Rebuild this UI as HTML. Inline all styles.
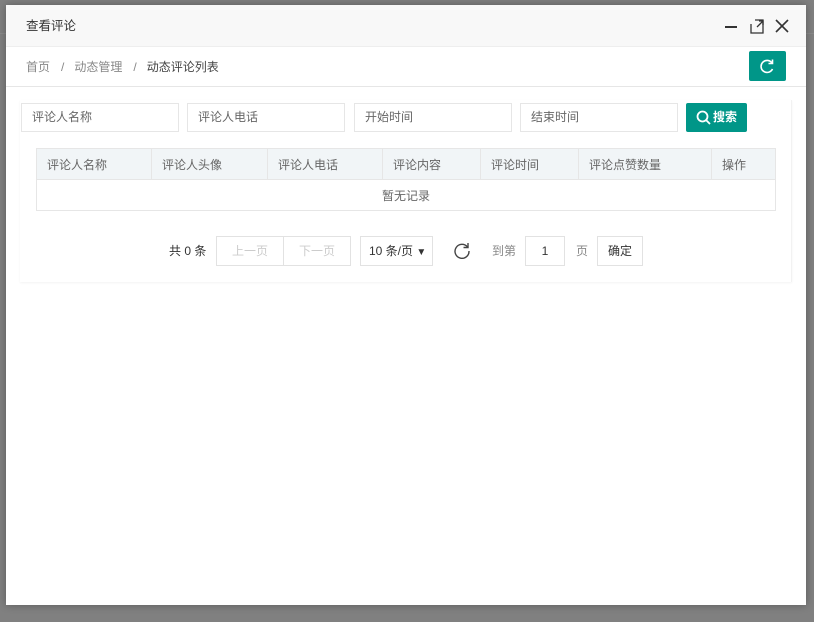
<!DOCTYPE html>
<html><head><meta charset="utf-8"><style>
*{box-sizing:border-box;margin:0;padding:0}
body{width:814px;height:622px;background:#808080;font-family:"Liberation Sans","Noto Sans CJK SC",sans-serif;font-size:12px;color:#333;position:relative;overflow:hidden}
.bgrow{position:absolute;left:0;right:0;height:1px;background:#8a8a8a}
.modal{position:absolute;left:6px;top:5px;width:800px;height:600px;background:#fff;box-shadow:0 0 8px rgba(0,0,0,.3)}
.hd{height:42px;background:#f8f8f8;border-bottom:1px solid #eee;padding-left:20px;line-height:42px;font-size:12.5px;color:#333;position:relative}
.bc{height:40px;border-bottom:1px solid #e6e6e6;position:relative;padding-left:20px;line-height:40px;color:#888}
.bc span.s{margin:0 10px 0 11px}
.refresh{position:absolute;right:20px;top:4px;width:37px;height:30px;background:#009688;border-radius:2px}
.inp{position:absolute;top:98px;height:29px;width:158px;border:1px solid #e6e6e6;padding-left:10px;line-height:27px;color:#666}
.sb{position:absolute;top:98px;left:680px;width:61px;height:29px;background:#009688;color:#fff;font-weight:bold;line-height:29px;padding-left:27px;border-radius:2px}
table{position:absolute;left:30px;top:143px;width:740px;border-collapse:collapse}
th,td{border:1px solid #e6e6e6;height:31px;font-weight:normal;text-align:left;padding-left:10px;color:#666}
th{background:#f1f5f7}
td{text-align:center;padding:0}
.pg{position:absolute;top:231px;height:30px;border:1px solid #e2e2e2;line-height:28px;text-align:center;background:#fff}
</style></head><body>
<div class="bgrow" style="top:33px"></div>
<div class="modal">
<div class="hd">查看评论
<svg style="position:absolute;right:68px;top:14px" width="14" height="14"><line x1="1" y1="8" x2="13" y2="8" stroke="#333" stroke-width="2"/></svg>
<svg style="position:absolute;right:42px;top:14px" width="14" height="15" fill="none" stroke="#333" stroke-width="1.3"><path d="M1 5V14H13V1H5"/><path d="M7 8L12.5 2.5M9 2H13V6"/></svg>
<svg style="position:absolute;right:17px;top:14px" width="14" height="14" stroke="#333" stroke-width="1.6"><line x1="1" y1="1" x2="13" y2="13"/><line x1="13" y1="1" x2="1" y2="13"/></svg>
</div>
<div class="bc">首页<span class="s">/</span>动态管理<span class="s">/</span><span style="color:#444">动态评论列表</span>
<div class="refresh"><svg width="37" height="30" fill="none" stroke="#fff" stroke-width="1.6"><path d="M23 12A6 6 0 1 0 23.5 18"/><path d="M23.5 8.5V12.5H19.5"/></svg></div>
</div>
<div style="position:absolute;left:14px;top:95px;width:772px;height:182px;box-shadow:0 1px 2px rgba(0,0,0,.05);border-right:1px solid #f2f2f2"></div>
<div class="inp" style="left:15px">评论人名称</div>
<div class="inp" style="left:181px">评论人电话</div>
<div class="inp" style="left:348px">开始时间</div>
<div class="inp" style="left:514px">结束时间</div>
<div class="sb"><svg style="position:absolute;left:10px;top:7px" width="16" height="16" fill="none" stroke="#fff" stroke-width="1.8"><circle cx="6.5" cy="6.5" r="5"/><line x1="10" y1="10" x2="14" y2="14"/></svg>搜索</div>
<table><tr><th style="width:115px">评论人名称</th><th style="width:116px">评论人头像</th><th style="width:115px">评论人电话</th><th style="width:98px">评论内容</th><th style="width:98px">评论时间</th><th style="width:133px">评论点赞数量</th><th>操作</th></tr>
<tr><td colspan="7">暂无记录</td></tr></table>
<div style="position:absolute;left:163px;top:231px;line-height:30px;color:#333">共 0 条</div>
<div class="pg" style="left:210px;width:68px;color:#ccc">上一页</div>
<div class="pg" style="left:277px;width:68px;color:#ccc">下一页</div>
<div class="pg" style="left:354px;width:73px;color:#333;text-align:left;padding-left:8px">10 条/页 <span style="font-size:10px">▼</span></div>
<svg style="position:absolute;left:447px;top:236px" width="18" height="18" fill="none" stroke="#444" stroke-width="1.4"><path d="M14.5 6A7 7 0 1 0 16 10"/><path d="M15 2V6.5H10.5"/></svg>
<div style="position:absolute;left:486px;top:231px;line-height:30px;color:#888">到第</div>
<div class="pg" style="left:519px;width:40px;color:#333">1</div>
<div style="position:absolute;left:570px;top:231px;line-height:30px;color:#888">页</div>
<div class="pg" style="left:591px;width:46px;color:#333">确定</div>
</div>
</body></html>
